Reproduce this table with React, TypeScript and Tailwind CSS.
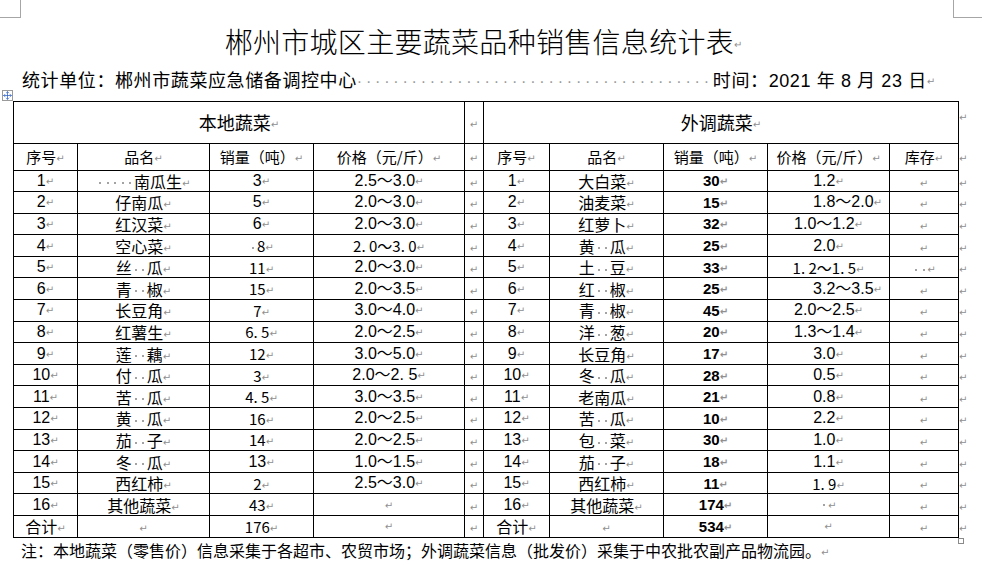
import { Move } from 'lucide-react';

// Word-style statistics sheet: local vs imported vegetables
const cjk = "font-['Noto_Sans_CJK_SC','Noto_Sans',sans-serif]";
const num = "font-['Liberation_Sans','Noto_Sans_CJK_SC',sans-serif]";
const song = "font-['Noto_Sans_CJK_SC',sans-serif] text-[15px]";

// "m:" prefix = SimSun-style thin digits, ">" prefix = shifted right by leading spaces
type Row = [string, string, string, string, string?];

const leftRows: Row[] = [
    ['1', '·····南瓜生', '3', '2.5～3.0'],
    ['2', '仔南瓜', '5', '2.0～3.0'],
    ['3', '红汉菜', '6', '2.0～3.0'],
    ['4', '空心菜', 'm:·8', 'm:2. 0～3. 0'],
    ['5', '丝··瓜', 'm:11', '2.0～3.0'],
    ['6', '青··椒', 'm:15', '2.0～3.5'],
    ['7', '长豆角', 'm:7', '3.0～4.0'],
    ['8', '红薯生', 'm:6. 5', '2.0～2.5'],
    ['9', '莲··藕', 'm:12', '3.0～5.0'],
    ['10', '付··瓜', 'm:3', '2.0～2. 5'],
    ['11', '苦··瓜', 'm:4. 5', '3.0～3.5'],
    ['12', '黄··瓜', 'm:16', '2.0～2.5'],
    ['13', '茄··子', 'm:14', '2.0～2.5'],
    ['14', '冬··瓜', '13', '1.0～1.5'],
    ['15', '西红柿', 'm:2', '2.5～3.0'],
    ['16', '其他蔬菜', 'm:43', ''],
    ['合计', '', 'm:176', ''],
];

const rightRows: Row[] = [
    ['1', '大白菜', '30', '1.2', ''],
    ['2', '油麦菜', '15', '>1.8～2.0', ''],
    ['3', '红萝卜', '32', '1.0～1.2', ''],
    ['4', '黄··瓜', '25', '2.0', ''],
    ['5', '土··豆', '33', 'm:1. 2～1. 5', '··'],
    ['6', '红··椒', '25', '>3.2～3.5', ''],
    ['7', '青··椒', '45', '2.0～2.5', ''],
    ['8', '洋··葱', '20', '1.3～1.4', ''],
    ['9', '长豆角', '17', '3.0', ''],
    ['10', '冬··瓜', '28', '0.5', ''],
    ['11', '老南瓜', '21', '0.8', ''],
    ['12', '苦··瓜', '10', '2.2', ''],
    ['13', '包··菜', '30', '1.0', ''],
    ['14', '茄··子', '18', '1.1', ''],
    ['15', '西红柿', '11', 'm:1. 9', ''],
    ['16', '其他蔬菜', '174', '·', ''],
    ['合计', '', '534', '', ''],
];

function Mark() {
    return <span className="font-['DejaVu_Sans',sans-serif] text-[10px] text-[#8f8f8f] align-middle">↵</span>;
}

// Word shows spaces as gray dots, one half-width cell each
function Txt({ s }: { s: string }) {
    return (
        <>
            {s.split('').map((c, i) =>
                c === '·' ? (
                    <span key={i} className="inline-flex w-[7.5px] h-[10px] items-center justify-center align-middle">
                        <span className="w-[2px] h-[2px] bg-[#a3a3a3]" />
                    </span>
                ) : (
                    <span key={i}>{c}</span>
                )
            )}
        </>
    );
}

function Val({ v, base }: { v: string; base: string }) {
    let s = v;
    let font = base;
    let shift = false;
    if (s.startsWith('>')) {
        shift = true;
        s = s.slice(1);
    }
    if (s.startsWith('m:')) {
        font = song;
        s = s.slice(2);
    }
    return (
        <td className={`border border-black p-0 text-center whitespace-pre ${font} ${shift ? 'pl-[38px]' : ''}`}>
            <Txt s={s} />
            <Mark />
        </td>
    );
}

export default function App() {
    const td = 'border border-black p-0 text-center whitespace-nowrap';
    return (
        <div className={`relative w-[982px] h-[573px] bg-white text-black overflow-hidden ${cjk}`}>
            {/* page corner marks */}
            <div className="absolute left-0 top-0 w-[21px] h-[18px] border-r border-b border-[#a6a6a6]" />
            <div className="absolute left-[953px] top-0 w-[29px] h-[18px] border-l border-b border-[#a6a6a6]" />

            <div className="flex flex-col pt-[22px]">
                <div className="ml-[11px] w-[945px] text-center text-[28px] leading-[38px] font-light tracking-[0.3px]">
                    郴州市城区主要蔬菜品种销售信息统计表<Mark />
                </div>

                <div className="pl-[22px] text-[18px] leading-[26px] mt-[2px] tracking-[0.6px] whitespace-pre">
                    <span>统计单位：郴州市蔬菜应急储备调控中心</span>
                    <span className="font-['Liberation_Sans',sans-serif] text-[#9a9a9a] text-[16px] tracking-[3.8px]">
                        ·······································
                    </span>
                    <span>时间：</span>
                    <span className={num}>2021 </span>
                    <span>年</span>
                    <span className={num}> 8 </span>
                    <span>月</span>
                    <span className={num}> 23 </span>
                    <span>日</span>
                    <Mark />
                </div>

                <table className="ml-[13px] mt-[5px] table-fixed border-collapse w-[959px] text-[16px] leading-none">
                    <colgroup>
                        <col className="w-[64px]" />
                        <col className="w-[132px]" />
                        <col className="w-[104px]" />
                        <col className="w-[151px]" />
                        <col className="w-[19px]" />
                        <col className="w-[66px]" />
                        <col className="w-[114px]" />
                        <col className="w-[104px]" />
                        <col className="w-[122px]" />
                        <col className="w-[69px]" />
                        <col className="w-[14px]" />
                    </colgroup>
                    <tbody>
                        <tr className="h-[42px]">
                            <td colSpan={4} className={`${td} text-[18px]`}>
                                本地蔬菜<Mark />
                            </td>
                            <td className={td}>
                                <Mark />
                            </td>
                            <td colSpan={5} className={`${td} text-[18px]`}>
                                外调蔬菜<Mark />
                            </td>
                            <td className="border-0 p-0 text-left align-top pt-[6px]">
                                <Mark />
                            </td>
                        </tr>
                        <tr className="h-[27px] text-[15px]">
                            <td className={td}>序号<Mark /></td>
                            <td className={td}>品名<Mark /></td>
                            <td className={td}>销量（吨）<Mark /></td>
                            <td className={td}>价格（元/斤）<Mark /></td>
                            <td className={td}><Mark /></td>
                            <td className={td}>序号<Mark /></td>
                            <td className={td}>品名<Mark /></td>
                            <td className={td}>销量（吨）<Mark /></td>
                            <td className={td}>价格（元/斤）<Mark /></td>
                            <td className={td}>库存<Mark /></td>
                            <td className="border-0 p-0 text-left"><Mark /></td>
                        </tr>
                        {leftRows.map((l, i) => {
                            const r = rightRows[i];
                            const total = l[0] === '合计';
                            return (
                                <tr key={i} className="h-[21.6px]">
                                    <td className={`${td} ${total ? '' : num}`}>
                                        {l[0]}
                                        <Mark />
                                    </td>
                                    <td className={td}>
                                        <Txt s={l[1]} />
                                        <Mark />
                                    </td>
                                    <Val v={l[2]} base={num} />
                                    <Val v={l[3]} base={num} />
                                    <td className={td}>
                                        <Mark />
                                    </td>
                                    <td className={`${td} ${total ? '' : num}`}>
                                        {r[0]}
                                        <Mark />
                                    </td>
                                    <td className={td}>
                                        <Txt s={r[1]} />
                                        <Mark />
                                    </td>
                                    <Val v={r[2]} base={`${num} font-bold text-[15px]`} />
                                    <Val v={r[3]} base={num} />
                                    <td className={td}>
                                        <Txt s={r[4] ?? ''} />
                                        <Mark />
                                    </td>
                                    <td className="border-0 p-0 text-left">
                                        <Mark />
                                    </td>
                                </tr>
                            );
                        })}
                    </tbody>
                </table>

                <div className="pl-[21px] text-[16px] leading-[24px] whitespace-nowrap">
                    注：本地蔬菜（零售价）信息采集于各超市、农贸市场；外调蔬菜信息（批发价）采集于中农批农副产品物流园。
                    <Mark />
                </div>
            </div>

            {/* table move handle and resize handle */}
            <div className="absolute left-[2px] top-[90px] w-[11px] h-[11px] border border-[#9a9a9a] bg-white flex items-center justify-center">
                <Move size={9} strokeWidth={2} color="#2b5fc4" />
            </div>
            <div className="absolute left-[958px] top-[538px] w-[6px] h-[6px] border border-[#8a8a8a] bg-white" />
        </div>
    );
}
